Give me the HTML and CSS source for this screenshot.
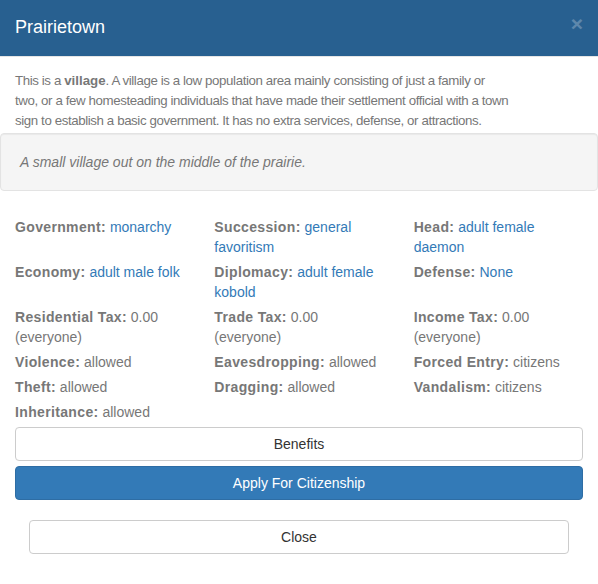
FILE: index.html
```html
<!DOCTYPE html>
<html>
<head>
<meta charset="utf-8">
<link rel="stylesheet" href="styles.css">
</head>
<body>
<div class="modal">
  <div class="modal-header">
    <h4 class="modal-title">Prairietown</h4>
    <span class="close">×</span>
  </div>
  <div class="modal-body">
    <p class="intro">This is a <b>village</b>. A village is a low population area mainly consisting of just a family or<br>two, or a few homesteading individuals that have made their settlement official with a town<br>sign to establish a basic government. It has no extra services, defense, or attractions.</p>
    <div class="well"><i>A small village out on the middle of the prairie.</i></div>
    <div class="stats">
      <div><b>Government:</b> <a>monarchy</a></div>
      <div><b>Succession:</b> <a>general favoritism</a></div>
      <div><b>Head:</b> <a>adult female daemon</a></div>
      <div><b>Economy:</b> <a>adult male folk</a></div>
      <div><b>Diplomacy:</b> <a>adult female kobold</a></div>
      <div><b>Defense:</b> <a>None</a></div>
      <div><b>Residential Tax:</b> 0.00 (everyone)</div>
      <div><b>Trade Tax:</b> 0.00 (everyone)</div>
      <div><b>Income Tax:</b> 0.00 (everyone)</div>
      <div><b>Violence:</b> allowed</div>
      <div><b>Eavesdropping:</b> allowed</div>
      <div><b>Forced Entry:</b> citizens</div>
      <div><b>Theft:</b> allowed</div>
      <div><b>Dragging:</b> allowed</div>
      <div><b>Vandalism:</b> citizens</div>
      <div><b>Inheritance:</b> allowed</div>
    </div>
    <div class="actions">
      <button class="btn">Benefits</button>
      <button class="btn btn-primary">Apply For Citizenship</button>
    </div>
  </div>
  <div class="modal-footer">
    <button class="btn">Close</button>
  </div>
</div>
</body>
</html>
```
FILE: styles.css
```css
* { box-sizing: border-box; }
body {
  margin: 0;
  font-family: "Liberation Sans", Arial, sans-serif;
  font-size: 14px;
  line-height: 20px;
  color: #777;
  background: #fff;
}
.modal { width: 598px; }
.modal-header {
  background: #286090;
  padding: 15px;
  border-bottom: 1px solid #e5e5e5;
  display: flex;
  justify-content: space-between;
  align-items: flex-start;
}
.modal-title {
  margin: 0;
  font-size: 18px;
  font-weight: normal;
  line-height: 25.7px;
  color: #fff;
}
.close {
  font-size: 21px;
  font-weight: bold;
  line-height: 1;
  color: #fff;
  opacity: 0.25;
  margin-top: -2px;
}
.modal-body { padding-top: 14px; }
.intro {
  margin: 0 0 2px;
  padding: 0 15px;
  font-size: 13.3px;
  letter-spacing: -0.4px;
  white-space: nowrap;
}
.intro b { color: #777; letter-spacing: 0; }
.well {
  background: #f5f5f5;
  border: 1px solid #e3e3e3;
  border-radius: 4px;
  box-shadow: inset 0 1px 1px rgba(0,0,0,.05);
  padding: 18px 19px;
}
.stats {
  margin-top: 26px;
  padding: 0 15px;
  display: grid;
  grid-template-columns: repeat(3, 1fr);
  column-gap: 30px;
  row-gap: 5px;
}
.stats b { letter-spacing: 0.35px; }
.stats a { color: #337ab7; text-decoration: none; }
.actions {
  padding: 0 15px;
  margin-top: 5px;
  display: flex;
  flex-direction: column;
  gap: 5px;
}
.btn {
  display: block;
  width: 100%;
  font-family: inherit;
  font-size: 14px;
  line-height: 20px;
  padding: 6px 12px;
  border: 1px solid #ccc;
  border-radius: 4px;
  background: #fff;
  color: #333;
  text-align: center;
}
.btn-primary {
  background: #337ab7;
  border-color: #2e6da4;
  color: #fff;
}
.modal-footer { padding: 20px 29px 0; }
```
